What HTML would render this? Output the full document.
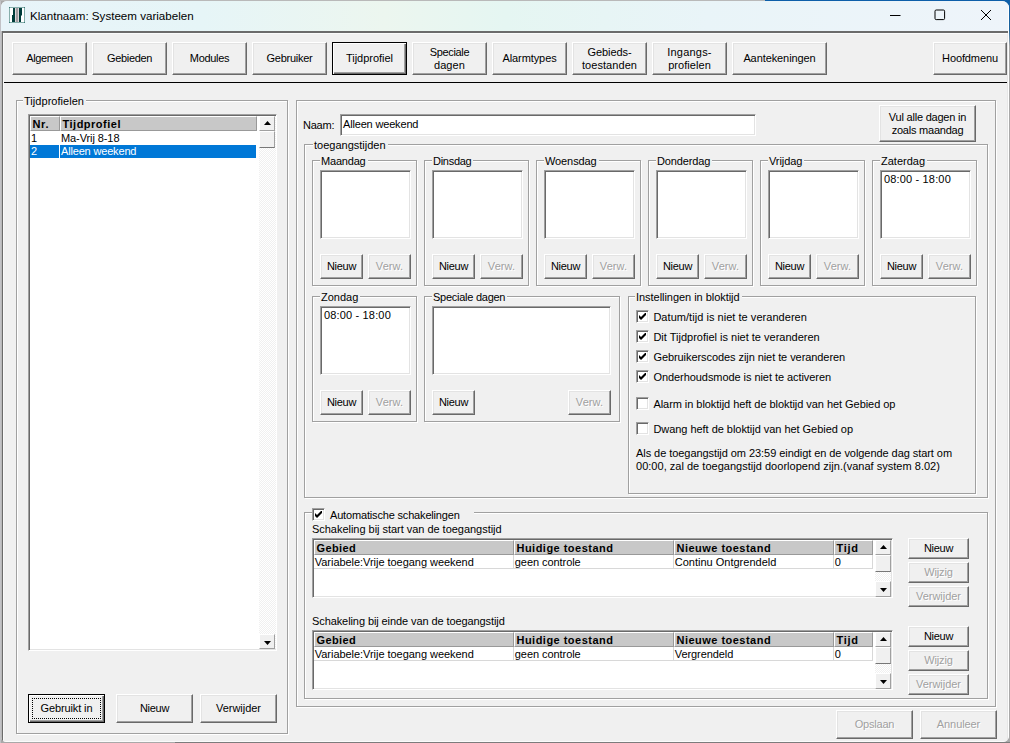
<!DOCTYPE html><html><head><meta charset="utf-8"><title>Klantnaam: Systeem variabelen</title><style>
html,body{margin:0;padding:0}
body{width:1010px;height:743px;overflow:hidden;position:relative;background:#a9a9a9;font-family:"Liberation Sans",sans-serif;font-size:11px;color:#000;line-height:13px}
div,span{box-sizing:border-box}
.a{position:absolute}
.t{position:absolute;white-space:nowrap;line-height:13px}
.gb{position:absolute;border:1px solid #a0a0a0;box-shadow:1px 1px 0 #fff,inset 1px 1px 0 #fff}
.lg{position:absolute;top:-6px;left:7px;background:#f0f0f0;padding:0 2px 0 1px;white-space:nowrap;line-height:13px}
.btn{position:absolute;background:#f0f0f0;border:1px solid;border-color:#fff #696969 #696969 #fff;box-shadow:inset -1px -1px 0 #a0a0a0,inset 1px 1px 0 #e3e3e3;display:flex;align-items:center;justify-content:center;text-align:center;white-space:nowrap;line-height:13px}
.btn.dis{color:#a0a0a0;text-shadow:1px 1px 0 #fff}
.btn.def{border-color:#000;box-shadow:inset 1px 1px 0 #fff,inset -1px -1px 0 #696969,inset -2px -2px 0 #a0a0a0}
.sk{position:absolute;background:#fff;border:1px solid;border-color:#a0a0a0 #fff #fff #a0a0a0;box-shadow:inset 1px 1px 0 #696969,inset -1px -1px 0 #e3e3e3;overflow:hidden}
.hd{position:absolute;background:#c8c8c8;font-weight:bold;border:1px solid;border-color:#fff #999 #999 #fff;line-height:14px;white-space:nowrap;overflow:hidden;padding-left:1.5px;font-size:11px}
.sb{position:absolute;background:#f0f0f0;border:1px solid;border-color:#fff #a0a0a0 #a0a0a0 #fff}
.trk{position:absolute;background-color:#f0f0f0;background-image:linear-gradient(45deg,#fff 25%,transparent 25%,transparent 75%,#fff 75%),linear-gradient(45deg,#fff 25%,transparent 25%,transparent 75%,#fff 75%);background-size:2px 2px;background-position:0 0,1px 1px}
.cb{position:absolute;width:13px;height:13px;background:#fff;border:1px solid;border-color:#a0a0a0 #fff #fff #a0a0a0;box-shadow:inset 1px 1px 0 #696969,inset -1px -1px 0 #e3e3e3}
.cb svg{position:absolute;left:2px;top:2px}
.up:after,.dn:after{content:"";position:absolute;left:4px;top:4px;width:7px;height:4px;background:#000;clip-path:polygon(0 100%,50% 0,100% 100%)}
.dn:after{top:6px;clip-path:polygon(0 0,100% 0,50% 100%)}
.foc:after{content:"";position:absolute;left:3px;top:3px;right:3px;bottom:3px;border:1px dotted #000}
</style></head><body>
<div class="a" style="left:0;top:0;width:765px;height:1px;background:#b9b9b9"></div>
<div class="a" style="left:0;top:1px;width:1px;height:742px;background:#c2c2c6"></div>
<div class="a" style="left:765px;top:0;width:245px;height:12px;background:#0d5ea9"></div>
<div class="a" style="left:1009px;top:0;width:1px;height:743px;background:linear-gradient(180deg,#0d5ea9,#1a6098 30px,#a9a9a9 46px)"></div>
<div class="a" style="left:175px;top:742px;width:835px;height:1px;background:#7c7c7c"></div>
<div class="a" style="left:1px;top:1px;width:1008px;height:741px;background:#f0f0f0;border-radius:6px 7px 6px 5px;overflow:hidden">
<div class="a" style="left:0;top:0;width:1008px;height:30px;background:linear-gradient(90deg,#e8f4f9,#e6f5f7 20%,#ecf6ef 38%,#e5f6f2 50%,#e9f4f8 70%,#eef4fa)"></div>
<div class="a" style="left:0;top:30px;width:1px;height:712px;background:#b9b9b9"></div>
<div class="a" style="left:1px;top:30px;width:1006px;height:2px;background:#6b6b6b"></div>
<div class="a" style="left:1px;top:30px;width:1px;height:710px;background:#6b6b6b"></div>
<div class="a" style="left:2px;top:32px;width:1px;height:707px;background:#fafafa"></div>
<div class="a" style="left:2px;top:32px;width:1004px;height:1px;background:#fafafa"></div>
<div class="a" style="left:1006px;top:32px;width:1px;height:709px;background:#e6e6e6"></div>
<div class="a" style="left:1007px;top:0px;width:1px;height:741px;background:#fff"></div>
<div class="a" style="left:0;top:740px;width:1008px;height:1px;background:#fbfbfb"></div>
<svg class="a" style="left:8px;top:6px" width="16" height="16" viewBox="0 0 16 16"><rect x="0.5" y="0.5" width="15" height="15" fill="#fff" stroke="#86aeab"/><rect x="4" y="1" width="2" height="14" fill="#003b39"/><rect x="3" y="8" width="1" height="7" fill="#003b39"/><rect x="6" y="1" width="1" height="14" fill="#dcd4d8"/><rect x="7" y="1" width="2" height="14" fill="#a19ca0"/><rect x="9" y="1" width="1" height="14" fill="#dcd4d8"/><rect x="10" y="1" width="2" height="14" fill="#003b39"/><rect x="12" y="1" width="1" height="7.5" fill="#003b39"/><rect x="0" y="0" width="1" height="1" fill="#3d7a76"/><rect x="15" y="0" width="1" height="1" fill="#3d7a76"/><rect x="0" y="15" width="1" height="1" fill="#3d7a76"/><rect x="15" y="15" width="1" height="1" fill="#3d7a76"/></svg>
<div class="t" style="left:29px;top:7px;font-size:11.6px;line-height:15px">Klantnaam: Systeem variabelen</div>
<svg class="a" style="left:884px;top:4px" width="120" height="20" viewBox="0 0 120 20"><path d="M5 10.5h10.5" stroke="#000" stroke-width="1" fill="none"/><rect x="50" y="5" width="9.6" height="9.6" rx="1.2" fill="none" stroke="#000" stroke-width="1"/><path d="M96 5l10 10M106 5l-10 10" stroke="#000" stroke-width="1" fill="none"/></svg>
<div class="btn " style="left:11px;top:41px;width:75px;height:33px"><span><span style="letter-spacing:-0.36px">Algemeen</span></span></div>
<div class="btn " style="left:91px;top:41px;width:75px;height:33px"><span><span style="letter-spacing:-0.35px">Gebieden</span></span></div>
<div class="btn " style="left:171px;top:41px;width:75px;height:33px"><span><span style="letter-spacing:-0.31px">Modules</span></span></div>
<div class="btn " style="left:251px;top:41px;width:75px;height:33px"><span><span style="letter-spacing:-0.25px">Gebruiker</span></span></div>
<div class="btn def" style="left:331px;top:41px;width:75px;height:33px"><span><span style="letter-spacing:-0.03px">Tijdprofiel</span></span></div>
<div class="btn " style="left:411px;top:41px;width:75px;height:33px"><span><span style="letter-spacing:-0.36px">Speciale</span><br><span style="letter-spacing:0.1px">dagen</span></span></div>
<div class="btn " style="left:491px;top:41px;width:75px;height:33px"><span><span style="letter-spacing:-0.08px">Alarmtypes</span></span></div>
<div class="btn " style="left:571px;top:41px;width:75px;height:33px"><span><span style="letter-spacing:-0.05px">Gebieds-</span><br><span style="letter-spacing:0.06px">toestanden</span></span></div>
<div class="btn " style="left:651px;top:41px;width:75px;height:33px"><span><span style="letter-spacing:0.21px">Ingangs-</span><br><span style="letter-spacing:0.06px">profielen</span></span></div>
<div class="btn " style="left:731px;top:41px;width:95px;height:33px"><span><span style="letter-spacing:-0.09px">Aantekeningen</span></span></div>
<div class="btn " style="left:932px;top:41px;width:74px;height:33px"><span><span style="letter-spacing:-0.11px">Hoofdmenu</span></span></div>
<div class="a" style="left:3px;top:81px;width:1003px;height:1px;background:#000"></div>
<div class="gb" style="left:15px;top:99px;width:272px;height:634px"><span class="lg" style="left:6px"><span style="letter-spacing:0.04px">Tijdprofielen</span></span></div>
<div class="sk" style="left:27px;top:113px;width:249px;height:537px"><div class="hd" style="left:1px;top:1px;width:30px;height:15px"><span style="letter-spacing:0.66px">Nr.</span></div><div class="hd" style="left:31px;top:1px;width:197px;height:15px"><span style="letter-spacing:0.5px">Tijdprofiel</span></div><div class="t" style="left:2px;top:17px">1</div><div class="t" style="left:32px;top:17px"><span style="letter-spacing:-0.09px">Ma-Vrij 8-18</span></div><div class="a" style="left:1px;top:30px;width:226px;height:13px;background:#0078d7"></div><div class="t" style="left:2px;top:30px;color:#fff">2</div><div class="a" style="left:30px;top:30px;width:1px;height:13px;background:#fff"></div><div class="t" style="left:32px;top:30px;color:#fff"><span style="letter-spacing:-0.17px">Alleen weekend</span></div><div class="trk" style="left:230px;top:1px;width:17px;height:533px"></div><div class="sb up" style="left:230px;top:1px;width:16px;height:15px"></div><div class="sb" style="left:230px;top:16px;width:16px;height:17px;border-bottom-color:#777"></div><div class="sb dn" style="left:230px;top:519px;width:16px;height:15px"></div></div>
<div class="btn def foc" style="left:27px;top:693px;width:77px;height:29px"><span><span style="letter-spacing:-0.12px">Gebruikt in</span></span></div>
<div class="btn " style="left:115px;top:693px;width:77px;height:29px"><span><span style="letter-spacing:-0.28px">Nieuw</span></span></div>
<div class="btn " style="left:199px;top:693px;width:77px;height:29px"><span><span style="letter-spacing:-0.03px">Verwijder</span></span></div>
<div class="gb" style="left:295px;top:99px;width:700px;height:607px"></div>
<div class="t" style="left:302px;top:118px;"><span style="letter-spacing:-0.23px">Naam:</span></div>
<div class="sk" style="left:339px;top:113px;width:416px;height:22px"><div class="t" style="left:2px;top:3px"><span style="letter-spacing:-0.17px">Alleen weekend</span></div></div>
<div class="btn " style="left:878px;top:104px;width:97px;height:37px"><span><span style="letter-spacing:-0.21px">Vul alle dagen in</span><br><span style="letter-spacing:-0.22px">zoals maandag</span></span></div>
<div class="gb" style="left:303px;top:143px;width:684px;height:354px"><span class="lg" style="left:8px">toegangstijden</span></div>
<div class="gb" style="left:311px;top:159px;width:105px;height:126px"><span class="lg" style=""><span style="letter-spacing:-0.19px">Maandag</span></span></div>
<div class="sk" style="left:319px;top:169px;width:91px;height:69px"></div>
<div class="btn " style="left:319px;top:253px;width:43px;height:25px"><span><span style="letter-spacing:-0.28px">Nieuw</span></span></div>
<div class="btn dis" style="left:367px;top:253px;width:43px;height:25px"><span><span style="letter-spacing:0.1px">Verw.</span></span></div>
<div class="gb" style="left:423px;top:159px;width:105px;height:126px"><span class="lg" style=""><span style="letter-spacing:-0.28px">Dinsdag</span></span></div>
<div class="sk" style="left:431px;top:169px;width:91px;height:69px"></div>
<div class="btn " style="left:431px;top:253px;width:43px;height:25px"><span><span style="letter-spacing:-0.28px">Nieuw</span></span></div>
<div class="btn dis" style="left:479px;top:253px;width:43px;height:25px"><span><span style="letter-spacing:0.1px">Verw.</span></span></div>
<div class="gb" style="left:535px;top:159px;width:105px;height:126px"><span class="lg" style=""><span style="letter-spacing:-0.1px">Woensdag</span></span></div>
<div class="sk" style="left:543px;top:169px;width:91px;height:69px"></div>
<div class="btn " style="left:543px;top:253px;width:43px;height:25px"><span><span style="letter-spacing:-0.28px">Nieuw</span></span></div>
<div class="btn dis" style="left:591px;top:253px;width:43px;height:25px"><span><span style="letter-spacing:0.1px">Verw.</span></span></div>
<div class="gb" style="left:647px;top:159px;width:105px;height:126px"><span class="lg" style=""><span style="letter-spacing:-0.14px">Donderdag</span></span></div>
<div class="sk" style="left:655px;top:169px;width:91px;height:69px"></div>
<div class="btn " style="left:655px;top:253px;width:43px;height:25px"><span><span style="letter-spacing:-0.28px">Nieuw</span></span></div>
<div class="btn dis" style="left:703px;top:253px;width:43px;height:25px"><span><span style="letter-spacing:0.1px">Verw.</span></span></div>
<div class="gb" style="left:759px;top:159px;width:105px;height:126px"><span class="lg" style=""><span style="letter-spacing:-0.06px">Vrijdag</span></span></div>
<div class="sk" style="left:767px;top:169px;width:91px;height:69px"></div>
<div class="btn " style="left:767px;top:253px;width:43px;height:25px"><span><span style="letter-spacing:-0.28px">Nieuw</span></span></div>
<div class="btn dis" style="left:815px;top:253px;width:43px;height:25px"><span><span style="letter-spacing:0.1px">Verw.</span></span></div>
<div class="gb" style="left:871px;top:159px;width:105px;height:126px"><span class="lg" style="">Zaterdag</span></div>
<div class="sk" style="left:879px;top:169px;width:91px;height:69px"><div class="t" style="left:3px;top:2px"><span style="letter-spacing:0.16px">08:00 - 18:00</span></div></div>
<div class="btn " style="left:879px;top:253px;width:43px;height:25px"><span><span style="letter-spacing:-0.28px">Nieuw</span></span></div>
<div class="btn dis" style="left:927px;top:253px;width:43px;height:25px"><span><span style="letter-spacing:0.1px">Verw.</span></span></div>
<div class="gb" style="left:311px;top:295px;width:105px;height:126px"><span class="lg" style="">Zondag</span></div>
<div class="sk" style="left:319px;top:305px;width:91px;height:69px"><div class="t" style="left:3px;top:2px"><span style="letter-spacing:0.16px">08:00 - 18:00</span></div></div>
<div class="btn " style="left:319px;top:389px;width:43px;height:25px"><span><span style="letter-spacing:-0.28px">Nieuw</span></span></div>
<div class="btn dis" style="left:367px;top:389px;width:43px;height:25px"><span><span style="letter-spacing:0.1px">Verw.</span></span></div>
<div class="gb" style="left:423px;top:295px;width:196px;height:126px"><span class="lg" style=""><span style="letter-spacing:-0.26px">Speciale dagen</span></span></div>
<div class="sk" style="left:431px;top:305px;width:179px;height:69px"></div>
<div class="btn " style="left:431px;top:389px;width:43px;height:25px"><span><span style="letter-spacing:-0.28px">Nieuw</span></span></div>
<div class="btn dis" style="left:567px;top:389px;width:43px;height:25px"><span><span style="letter-spacing:0.1px">Verw.</span></span></div>
<div class="gb" style="left:627px;top:295px;width:348px;height:198px"><span class="lg" style="left:6px"><span style="letter-spacing:-0.04px">Instellingen in bloktijd</span></span></div>
<div class="cb" style="left:635px;top:309px"><svg width="7" height="7" viewBox="0 0 7 7"><path d="M0 2v3l2 2 5-5V-1L2 4z" fill="#000"/></svg></div>
<div class="t" style="left:652.4px;top:310px;"><span style="letter-spacing:0.04px">Datum/tijd is niet te veranderen</span></div>
<div class="cb" style="left:635px;top:329px"><svg width="7" height="7" viewBox="0 0 7 7"><path d="M0 2v3l2 2 5-5V-1L2 4z" fill="#000"/></svg></div>
<div class="t" style="left:652.4px;top:330px;">Dit Tijdprofiel is niet te veranderen</div>
<div class="cb" style="left:635px;top:349px"><svg width="7" height="7" viewBox="0 0 7 7"><path d="M0 2v3l2 2 5-5V-1L2 4z" fill="#000"/></svg></div>
<div class="t" style="left:652.4px;top:350px;"><span style="letter-spacing:-0.07px">Gebruikerscodes zijn niet te veranderen</span></div>
<div class="cb" style="left:635px;top:369px"><svg width="7" height="7" viewBox="0 0 7 7"><path d="M0 2v3l2 2 5-5V-1L2 4z" fill="#000"/></svg></div>
<div class="t" style="left:652.4px;top:370px;"><span style="letter-spacing:-0.06px">Onderhoudsmode is niet te activeren</span></div>
<div class="cb" style="left:635px;top:396px"></div>
<div class="t" style="left:652.4px;top:397px;"><span style="letter-spacing:-0.05px">Alarm in bloktijd heft de bloktijd van het Gebied op</span></div>
<div class="cb" style="left:635px;top:421px"></div>
<div class="t" style="left:652.4px;top:422px;"><span style="letter-spacing:-0.04px">Dwang heft de bloktijd van het Gebied op</span></div>
<div class="t" style="left:635px;top:446px;"><span style="letter-spacing:-0.06px">Als de toegangstijd om 23:59 eindigt en de volgende dag start om</span><br><span style="letter-spacing:0.02px">00:00, zal de toegangstijd doorlopend zijn.(vanaf system 8.02)</span></div>
<div class="gb" style="left:303px;top:511px;width:684px;height:187px"></div>
<div class="a" style="left:311px;top:505px;width:162px;height:14px;background:#f0f0f0"></div>
<div class="cb" style="left:311px;top:507px"><svg width="7" height="7" viewBox="0 0 7 7"><path d="M0 2v3l2 2 5-5V-1L2 4z" fill="#000"/></svg></div>
<div class="t" style="left:329px;top:508px;"><span style="letter-spacing:-0.17px">Automatische schakelingen</span></div>
<div class="t" style="left:311px;top:522px;"><span style="letter-spacing:-0.03px">Schakeling bij start van de toegangstijd</span></div>
<div class="sk" style="left:311px;top:537px;width:581px;height:60px"><div class="hd" style="left:1px;top:1px;width:200px;height:15px"><span style="letter-spacing:0.39px">Gebied</span></div><div class="t" style="left:1.8px;top:17px"><span style="letter-spacing:-0.04px">Variabele:Vrije toegang weekend</span></div><div class="a" style="left:200px;top:16px;width:1px;height:13px;background:#d8d8d8"></div><div class="hd" style="left:201px;top:1px;width:160px;height:15px"><span style="letter-spacing:0.48px">Huidige toestand</span></div><div class="t" style="left:201.8px;top:17px"><span style="letter-spacing:-0.06px">geen controle</span></div><div class="a" style="left:360px;top:16px;width:1px;height:13px;background:#d8d8d8"></div><div class="hd" style="left:361px;top:1px;width:160px;height:15px"><span style="letter-spacing:0.48px">Nieuwe toestand</span></div><div class="t" style="left:361.8px;top:17px">Continu Ontgrendeld</div><div class="a" style="left:520px;top:16px;width:1px;height:13px;background:#d8d8d8"></div><div class="hd" style="left:521px;top:1px;width:39px;height:15px"><span style="letter-spacing:0.71px">Tijd</span></div><div class="t" style="left:521.8px;top:17px">0</div><div class="a" style="left:559px;top:16px;width:1px;height:13px;background:#d8d8d8"></div><div class="a" style="left:1px;top:29px;width:559px;height:1px;background:#d8d8d8"></div><div class="trk" style="left:562px;top:1px;width:16px;height:57px"></div><div class="sb up" style="left:562px;top:1px;width:16px;height:15px"></div><div class="sb" style="left:562px;top:16px;width:16px;height:17px;border-bottom-color:#777"></div><div class="sb dn" style="left:562px;top:42px;width:16px;height:16px"></div></div>
<div class="t" style="left:311px;top:614px;"><span style="letter-spacing:-0.09px">Schakeling bij einde van de toegangstijd</span></div>
<div class="sk" style="left:311px;top:629px;width:581px;height:60px"><div class="hd" style="left:1px;top:1px;width:200px;height:15px"><span style="letter-spacing:0.39px">Gebied</span></div><div class="t" style="left:1.8px;top:17px"><span style="letter-spacing:-0.04px">Variabele:Vrije toegang weekend</span></div><div class="a" style="left:200px;top:16px;width:1px;height:13px;background:#d8d8d8"></div><div class="hd" style="left:201px;top:1px;width:160px;height:15px"><span style="letter-spacing:0.48px">Huidige toestand</span></div><div class="t" style="left:201.8px;top:17px"><span style="letter-spacing:-0.06px">geen controle</span></div><div class="a" style="left:360px;top:16px;width:1px;height:13px;background:#d8d8d8"></div><div class="hd" style="left:361px;top:1px;width:160px;height:15px"><span style="letter-spacing:0.48px">Nieuwe toestand</span></div><div class="t" style="left:361.8px;top:17px"><span style="letter-spacing:-0.08px">Vergrendeld</span></div><div class="a" style="left:520px;top:16px;width:1px;height:13px;background:#d8d8d8"></div><div class="hd" style="left:521px;top:1px;width:39px;height:15px"><span style="letter-spacing:0.71px">Tijd</span></div><div class="t" style="left:521.8px;top:17px">0</div><div class="a" style="left:559px;top:16px;width:1px;height:13px;background:#d8d8d8"></div><div class="a" style="left:1px;top:29px;width:559px;height:1px;background:#d8d8d8"></div><div class="trk" style="left:562px;top:1px;width:16px;height:57px"></div><div class="sb up" style="left:562px;top:1px;width:16px;height:15px"></div><div class="sb" style="left:562px;top:16px;width:16px;height:17px;border-bottom-color:#777"></div><div class="sb dn" style="left:562px;top:42px;width:16px;height:16px"></div></div>
<div class="btn " style="left:907px;top:537px;width:61px;height:21px"><span><span style="letter-spacing:-0.28px">Nieuw</span></span></div>
<div class="btn dis" style="left:907px;top:561px;width:61px;height:21px"><span><span style="letter-spacing:-0.17px">Wijzig</span></span></div>
<div class="btn dis" style="left:907px;top:585px;width:61px;height:21px"><span><span style="letter-spacing:-0.03px">Verwijder</span></span></div>
<div class="btn " style="left:907px;top:625px;width:61px;height:21px"><span><span style="letter-spacing:-0.28px">Nieuw</span></span></div>
<div class="btn dis" style="left:907px;top:649px;width:61px;height:21px"><span><span style="letter-spacing:-0.17px">Wijzig</span></span></div>
<div class="btn dis" style="left:907px;top:673px;width:61px;height:21px"><span><span style="letter-spacing:-0.03px">Verwijder</span></span></div>
<div class="btn dis" style="left:835px;top:709px;width:77px;height:29px"><span><span style="letter-spacing:-0.21px">Opslaan</span></span></div>
<div class="btn dis" style="left:919px;top:709px;width:77px;height:29px"><span><span style="letter-spacing:-0.08px">Annuleer</span></span></div>
</div></body></html>
